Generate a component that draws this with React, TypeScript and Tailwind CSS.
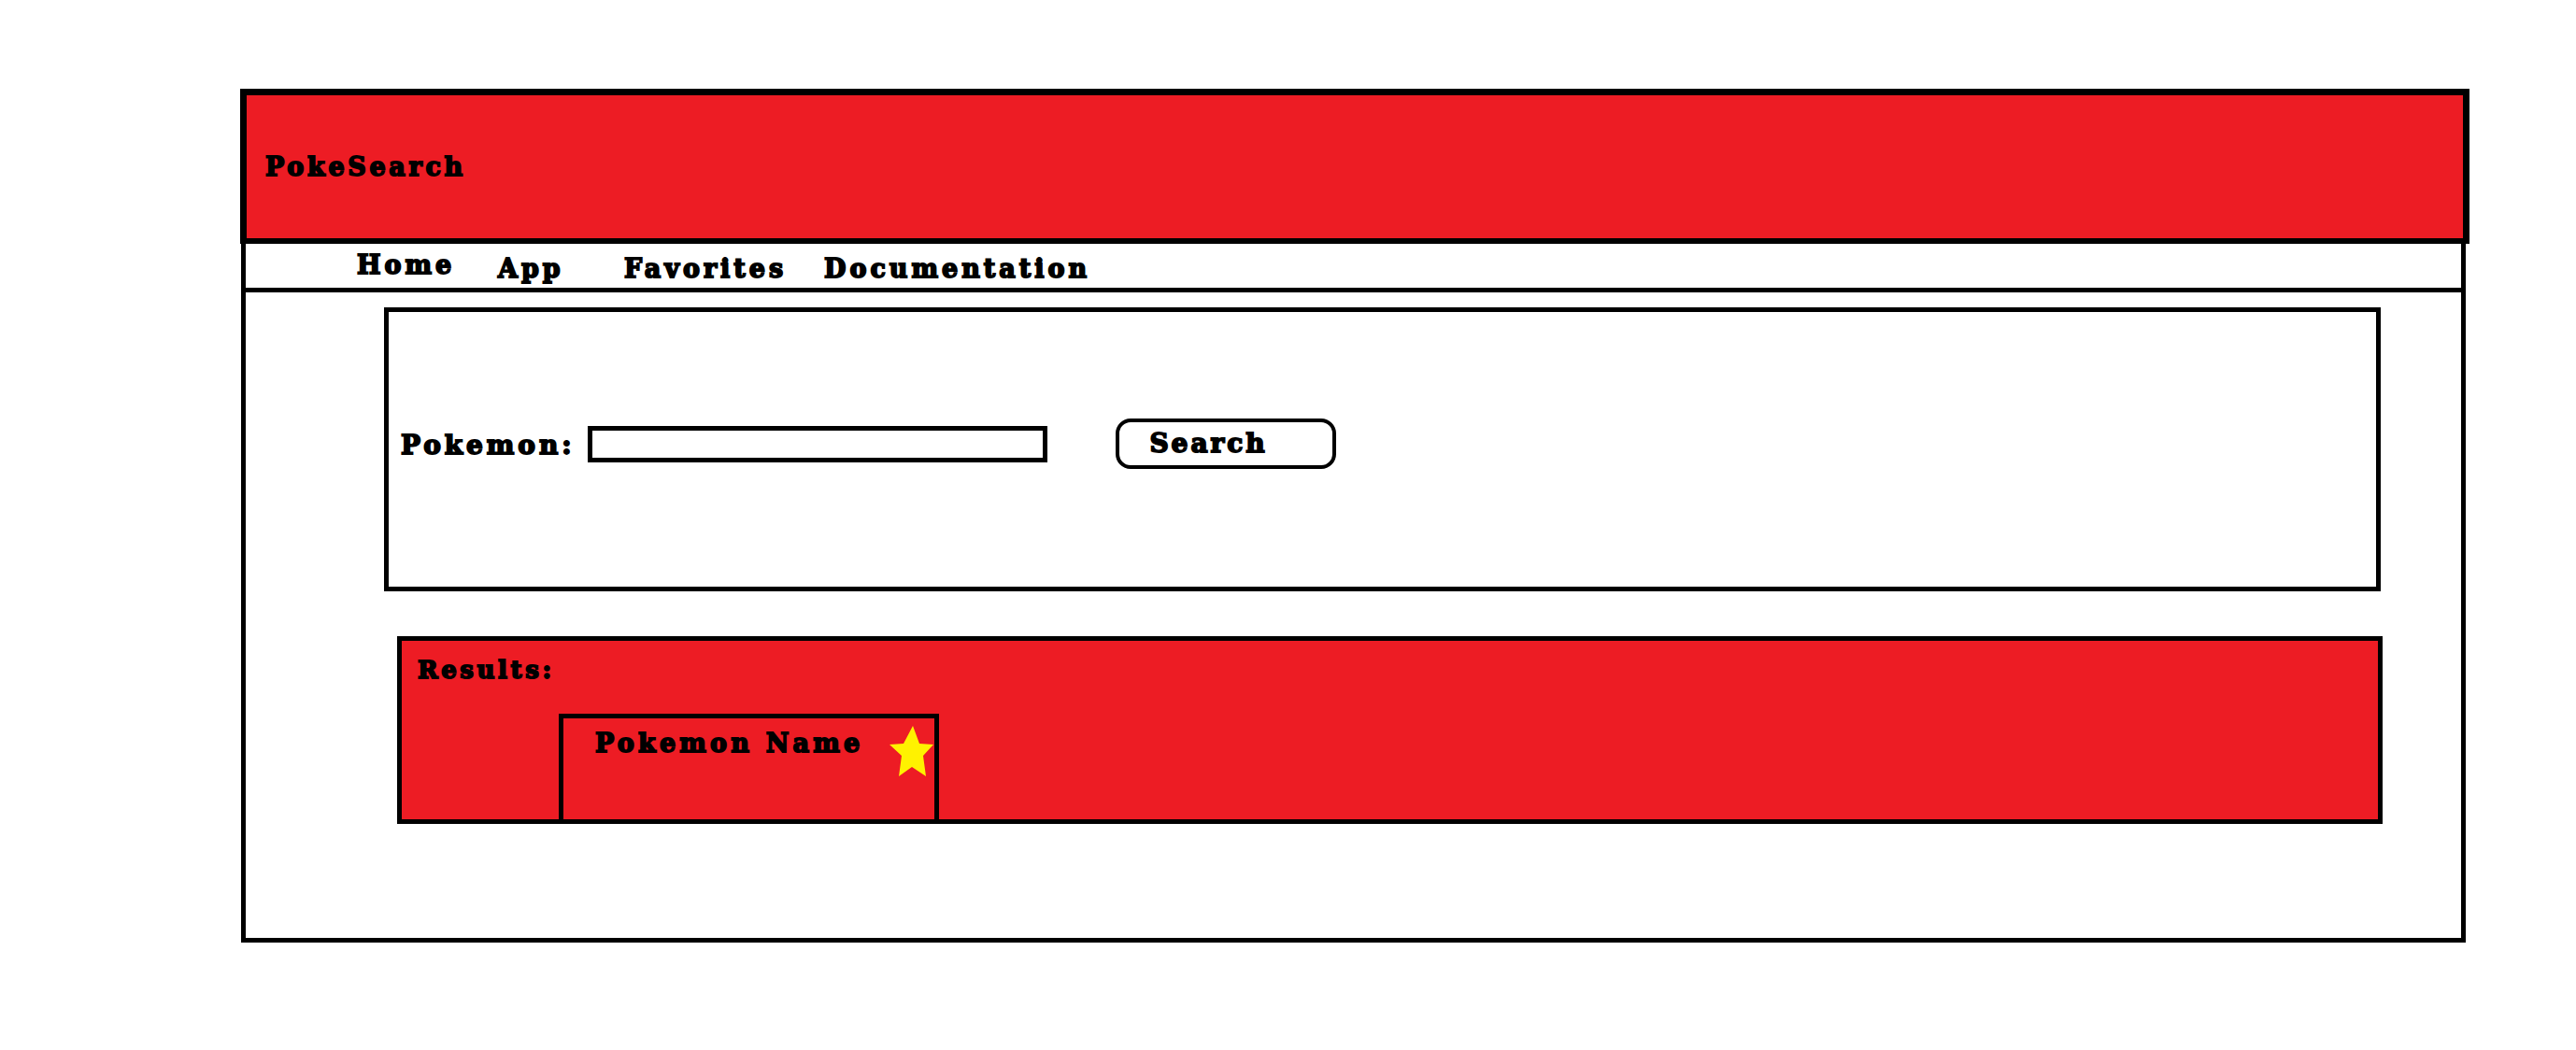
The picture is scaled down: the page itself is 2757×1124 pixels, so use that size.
import React from "react";

const font = { fontFamily: '"DejaVu Serif", "Liberation Serif", serif' };

function Star() {
  return (
    <svg width="48" height="56" viewBox="0 0 48 56" className="absolute left-[349px] top-[7px]">
      <polygon
        points="25,1 32,20 47,21 36,33 39,55 24,45 10,55 13,33 0,21 15,20"
        fill="#fff200"
      />
    </svg>
  );
}

export default function App() {
  return (
    <div className="min-h-screen bg-white text-black" style={font}>
      <div className="pt-[95px] pl-[257px] pb-[115px]">
        <div className="w-[2386px]">
          <header className="h-[166px] border-[7px] border-b-[6px] border-black bg-[#ed1c24] flex items-center pl-[20px]">
            <span className="text-[27px] leading-none font-bold tracking-[3.7px] [-webkit-text-stroke:1.8px_black]">PokeSearch</span>
          </header>
          <div className="ml-[1px] w-[2381px] border-x-[5px] border-b-[5px] border-black">
            <nav className="h-[52px] border-b-[5px] border-black flex items-start pl-[119px] text-[27px] leading-none font-bold tracking-[4px] [-webkit-text-stroke:1.8px_black]">
              <a className="w-[151px] pt-[9px]">Home</a>
              <a className="w-[135px] pt-[13px]">App</a>
              <a className="w-[214px] pt-[13px]">Favorites</a>
              <a className="pt-[13px]">Documentation</a>
            </nav>
            <main className="pt-[16px] pb-[122px]">
              <section className="ml-[148px] w-[2137px] h-[304px] border-[5px] border-black pt-[114px]">
                <div className="flex items-center h-[54px] pl-[13px]">
                  <label className="text-[28px] leading-none font-bold tracking-[3.9px] pt-[4px] [-webkit-text-stroke:1.8px_black]">Pokemon:</label>
                  <input
                    type="text"
                    className="ml-[14px] w-[492px] h-[39px] border-[5px] border-black bg-white outline-none"
                  />
                  <button className="ml-[73px] w-[236px] h-[54px] border-[4px] border-black rounded-[16px] bg-white text-left pl-[32px] text-[28px] leading-none font-bold tracking-[3px] [-webkit-text-stroke:1.8px_black]">
                    Search
                  </button>
                </div>
              </section>
              <section className="mt-[48px] ml-[162px] w-[2125px] h-[201px] border-[5px] border-black bg-[#ed1c24] flex flex-col">
                <div className="pl-[17px] pt-[18px] text-[26px] leading-none font-bold tracking-[3.6px] [-webkit-text-stroke:1.8px_black]">Results:</div>
                <div className="mt-auto ml-[168px] w-[407px] h-[113px] border-x-[5px] border-t-[5px] border-black relative pl-[34px] pt-[13px]">
                  <span className="text-[27px] leading-none font-bold tracking-[4.2px] [-webkit-text-stroke:1.8px_black]">Pokemon Name</span>
                  <Star />
                </div>
              </section>
            </main>
          </div>
        </div>
      </div>
    </div>
  );
}
